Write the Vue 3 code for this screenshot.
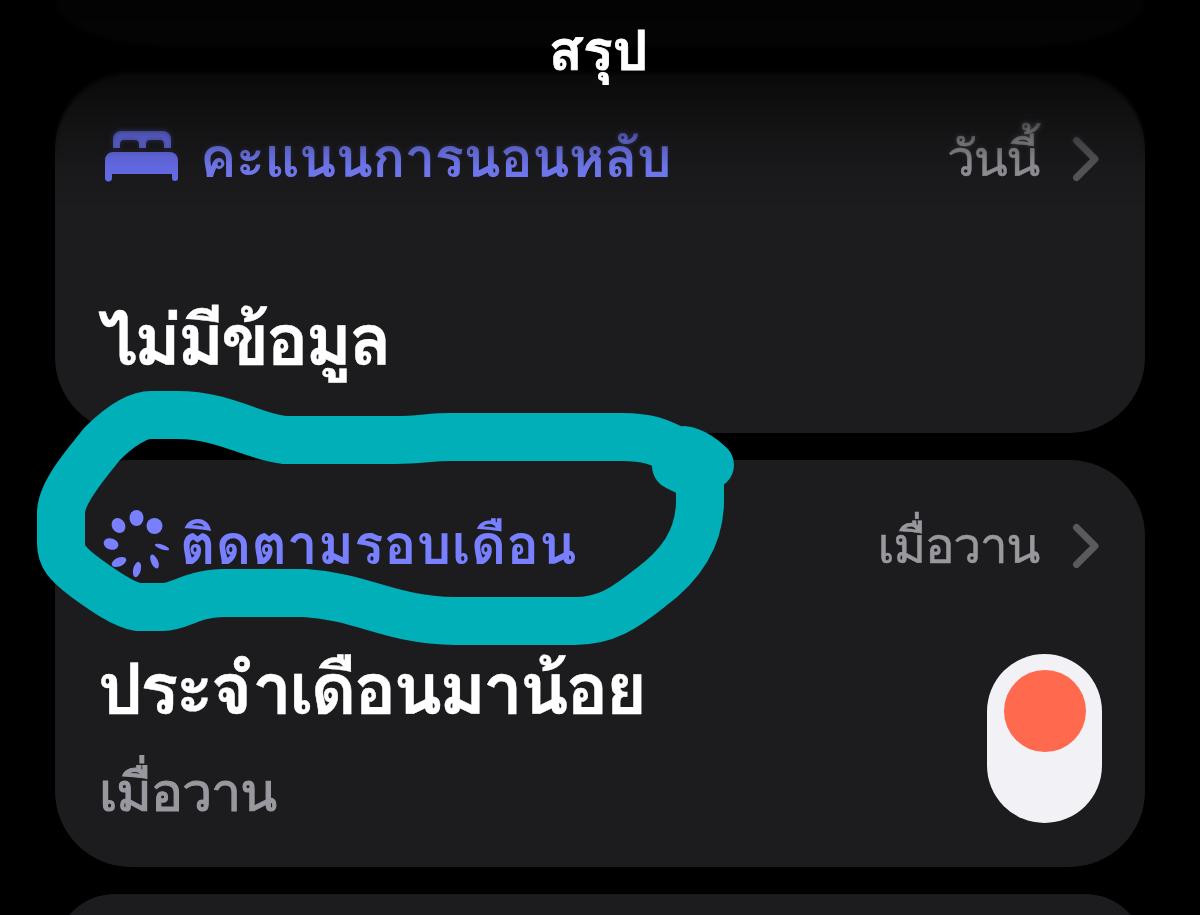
<template>
  <main class="screen">
    <section class="card card-previous"></section>

    <section class="card card-sleep">
      <div class="card-head">
        <svg class="bed" viewBox="0 0 74 51" aria-hidden="true">
          <path d="M8 17V8a8 8 0 0 1 8-8H58a8 8 0 0 1 8 8V17H59V13Q59 9 55 9H45Q41 9 41 13V17H34V13Q34 9 30 9H19Q15 9 15 13V17Z" />
          <path d="M0 29a8 8 0 0 1 8-8H65a8 8 0 0 1 8 8V47a3 3 0 0 1-6 0V43H7v4a3 3 0 0 1-7 0Z" />
        </svg>
        <h2 class="category sleep-name">คะแนนการนอนหลับ</h2>
        <span class="when">วันนี้</span>
        <svg class="chevron" viewBox="0 0 28 46" aria-hidden="true"><path d="M4.5 4.5 23 23 4.5 41.5" /></svg>
      </div>
      <p class="value no-data">ไม่มีข้อมูล</p>
    </section>

    <section class="card card-cycle">
      <div class="card-head">
        <svg class="cycle" viewBox="0 0 66 68" aria-hidden="true">
          <ellipse
            v-for="(p, i) in petals"
            :key="i"
            :cx="p.x"
            :cy="p.y"
            :rx="p.rx"
            :ry="p.ry"
            :transform="`rotate(${p.turn} ${p.x} ${p.y})`"
          />
        </svg>
        <h2 class="category cycle-name">ติดตามรอบเดือน</h2>
        <span class="when">เมื่อวาน</span>
        <svg class="chevron" viewBox="0 0 28 46" aria-hidden="true"><path d="M4.5 4.5 23 23 4.5 41.5" /></svg>
      </div>
      <div class="card-body">
        <div class="reading">
          <p class="value flow">ประจำเดือนมาน้อย</p>
          <p class="date">เมื่อวาน</p>
        </div>
        <div class="pill"><span class="dot"></span></div>
      </div>
    </section>

    <section class="card card-next"></section>

    <div class="haze"></div>
    <div class="fade"></div>
    <h1 class="title">สรุป</h1>

    <!-- hand-drawn highlight around the cycle tracking heading -->
    <svg class="marker" viewBox="0 0 1200 915" aria-hidden="true">
      <path d="M684 470 L676 466 L684 450 C693 451 704 459 710 465 M700 468 V503 C699 540 680 566 650 588 C625 608 606 621 575 621 H455 C389 620 365 597 305 593 H222 C190 594 181 607 163 607 H138 C124 605 104 591 86 578 C66 563 61 556 61 543 V512 C62 491 86 464 102 444 C120 426 138 415 151 415 H178 C223 415 254 437 285 440 H395 C420 440 430 437 450 437 H622 C650 437 661 443 675 450" />
    </svg>
  </main>
</template>

<script setup>
const petals = [
  { x: 33.5, y: 8, rx: 7, ry: 8, turn: 0 },
  { x: 51.5, y: 16, rx: 8, ry: 8, turn: 0 },
  { x: 59, y: 37, rx: 7.5, ry: 2.3, turn: 20 },
  { x: 51.5, y: 51.5, rx: 3.4, ry: 7.5, turn: -24 },
  { x: 34, y: 59.5, rx: 3.8, ry: 7.8, turn: 14 },
  { x: 16, y: 52, rx: 7.8, ry: 4.3, turn: -24 },
  { x: 8, y: 34, rx: 7.5, ry: 5.6, turn: 18 },
  { x: 15.5, y: 15.5, rx: 6.6, ry: 7.8, turn: -30 },
]
</script>

<style>
body {
  margin: 0;
  background: #000;
}
</style>

<style scoped>
.screen {
  position: relative;
  display: flex;
  flex-direction: column;
  gap: 27px;
  width: 1200px;
  height: 915px;
  padding: 0 55px;
  box-sizing: border-box;
  overflow: hidden;
  background: #000;
  color: #fff;
  font-family: Loma, FreeSans, "Noto Sans Thai Looped", "Noto Sans Thai", sans-serif;
}

h1, h2, p {
  margin: 0;
}

.card {
  flex: none;
  box-sizing: border-box;
  padding: 0 43px 0 45px;
  border-radius: 76px;
  background: #1c1c1e;
}

.card-previous {
  height: 46px;
  border-radius: 0 0 110px 110px / 0 0 46px 46px;
}

.card-sleep {
  height: 360px;
  padding-top: 52px;
}

.card-cycle {
  height: 407px;
  padding-top: 52px;
}

.card-next {
  height: 120px;
}

.card-head {
  display: flex;
  align-items: center;
  height: 70px;
}

.bed {
  width: 74px;
  height: 51px;
  margin-left: 5px;
  margin-right: 21px;
  margin-bottom: 8px;
  fill: #6c73f5;
}

.cycle {
  width: 66px;
  height: 68px;
  margin-left: 3px;
  margin-right: 11px;
  margin-bottom: 6px;
  fill: #7880ff;
}

.category {
  margin-bottom: 5px;
  color: #7880ff;
  font-size: 54.5px;
  font-weight: 600;
  line-height: 70px;
  white-space: nowrap;
}

.sleep-name {
  letter-spacing: -0.6px;
}

.cycle-name {
  letter-spacing: 0.3px;
}

.when {
  margin-left: auto;
  margin-bottom: 2px;
  color: #98989f;
  font-size: 50px;
  line-height: 70px;
  letter-spacing: -1.5px;
  white-space: nowrap;
  -webkit-text-stroke: 0.5px #98989f;
}

.chevron {
  width: 28px;
  height: 46px;
  margin-left: 33px;
  margin-right: 2px;
  margin-bottom: 2px;
  fill: none;
  stroke: #5a5a5e;
  stroke-width: 7;
  stroke-linecap: round;
  stroke-linejoin: round;
}

.value {
  margin-left: -2px;
  font-size: 71px;
  font-weight: 600;
  line-height: 90px;
  white-space: nowrap;
  -webkit-text-stroke: 0.4px #fff;
}

.no-data {
  margin-top: 100px;
  letter-spacing: -3.4px;
}

.flow {
  letter-spacing: -2.9px;
}

.card-body {
  display: flex;
  justify-content: space-between;
  margin-top: 59px;
}

.reading {
  display: flex;
  flex-direction: column;
  margin-top: 3px;
}

.date {
  margin-top: 23px;
  margin-left: -1px;
  color: #98989f;
  font-size: 54px;
  font-weight: 400;
  line-height: 70px;
  letter-spacing: -1.2px;
  -webkit-text-stroke: 1.2px #98989f;
}

.pill {
  display: flex;
  justify-content: center;
  width: 115px;
  height: 169px;
  margin-top: 13px;
  padding-top: 16px;
  box-sizing: border-box;
  border-radius: 58px;
  background: #f1f1f6;
}

.dot {
  width: 82px;
  height: 82px;
  border-radius: 50%;
  background: #ff694e;
}

.haze {
  position: absolute;
  inset: 0 0 auto;
  height: 165px;
  backdrop-filter: blur(2.5px);
  mask-image: linear-gradient(#000 90px, transparent);
}

.fade {
  position: absolute;
  inset: 0 0 auto;
  height: 205px;
  background: linear-gradient(rgba(0, 0, 0, 0.88) 0, rgba(0, 0, 0, 0.84) 45px, rgba(0, 0, 0, 0.6) 80px, rgba(0, 0, 0, 0.32) 120px, rgba(0, 0, 0, 0.1) 165px, transparent);
}

.title {
  position: absolute;
  top: 15px;
  left: 0;
  width: 1197px;
  font-size: 56px;
  font-weight: 600;
  line-height: 72px;
  text-align: center;
  -webkit-text-stroke: 0.8px #fff;
}

.marker {
  position: absolute;
  inset: 0;
  width: 1200px;
  height: 915px;
  fill: none;
  stroke: #00afb7;
  stroke-width: 48;
  stroke-linecap: round;
  stroke-linejoin: round;
}
</style>
